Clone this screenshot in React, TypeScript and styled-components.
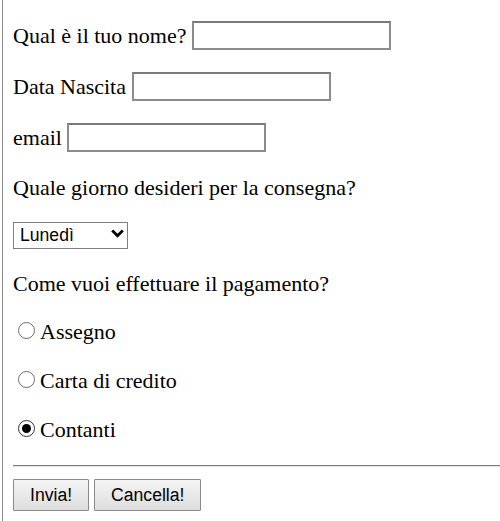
import styled, { createGlobalStyle } from 'styled-components'

// global
const GlobalStyle = createGlobalStyle`
  html, body {
    margin: 0;
    padding: 0;
    background: #fff;
    overflow: hidden;
  }
  body {
    font-family: 'Liberation Serif', 'Times New Roman', serif;
    font-size: 22px;
    color: #000;
  }
`

// styled
const Page = styled.form`
  margin-left: 2px;
  min-height: 521px;
  box-sizing: border-box;
  border-left: 1px solid #8a8a8a;
  padding: 21px 0 0 10px;
  display: flex;
  flex-direction: column;
`

const FieldRow = styled.div`
  display: flex;
  align-items: center;
  gap: 5.5px;
  height: 29px;
  margin-bottom: 22px;
  line-height: 24px;
`

const TextInput = styled.input`
  box-sizing: border-box;
  width: 199px;
  height: 29px;
  margin: 0;
  border: 2px solid #8c8c8c;
  border-top-color: #7a7a7a;
  background: #fff;
  font-family: 'Liberation Sans', Arial, sans-serif;
  font-size: 17px;
  padding: 0 4px;
  outline: none;
`

const Question = styled.p<{ $top: number }>`
  margin: ${(p) => p.$top}px 0 0;
  line-height: 24px;
  height: 24px;
`

const SelectWrap = styled.div`
  position: relative;
  width: 115px;
  height: 27px;
  margin-top: 21px;

  svg {
    position: absolute;
    right: 4px;
    top: 8px;
    pointer-events: none;
  }
`

const Select = styled.select`
  appearance: none;
  box-sizing: border-box;
  width: 100%;
  height: 100%;
  margin: 0;
  border: 1px solid #7f7f7f;
  border-radius: 0;
  background: #fff;
  padding: 0 0 0 6px;
  font-family: 'Liberation Sans', Arial, sans-serif;
  font-size: 17.6px;
  color: #000;
  outline: none;
`

const RadioList = styled.div`
  display: flex;
  flex-direction: column;
  gap: 25px;
  margin-top: 23.5px;
`

const RadioRow = styled.label`
  display: flex;
  align-items: flex-start;
  height: 24px;
  line-height: 24px;
`

const RadioDot = styled.span<{ $checked?: boolean }>`
  box-sizing: border-box;
  width: 17px;
  height: 17px;
  margin: 2.5px 5px 0 5px;
  border-radius: 50%;
  border: 1px solid ${(p) => (p.$checked ? '#333' : '#6e6e6e')};
  background: #fff;
  display: flex;
  align-items: center;
  justify-content: center;

  &::after {
    content: '';
    display: ${(p) => (p.$checked ? 'block' : 'none')};
    width: 9px;
    height: 9px;
    border-radius: 50%;
    background: #000;
  }
`

const Rule = styled.hr`
  margin: 23.5px 0 0;
  height: 0;
  border: none;
  border-top: 1px solid #7e7e7e;
  border-bottom: 1px solid #e4e4e4;
`

const ButtonBar = styled.div`
  display: flex;
  gap: 5px;
  margin-top: 12px;
`

const Button = styled.button`
  box-sizing: border-box;
  height: 32px;
  padding: 0 16px;
  margin: 0;
  border: 1px solid #8a8a8a;
  border-radius: 1px;
  background: linear-gradient(#f4f4f4, #dedede);
  font-family: 'Liberation Sans', Arial, sans-serif;
  font-size: 17.6px;
  color: #000;
  cursor: pointer;
`

// component
const App = () => {
  return (
    <>
      <GlobalStyle />
      <Page onSubmit={(e) => e.preventDefault()}>
        <FieldRow>
          <span>Qual è il tuo nome?</span>
          <TextInput type='text' />
        </FieldRow>
        <FieldRow>
          <span>Data Nascita</span>
          <TextInput type='text' />
        </FieldRow>
        <FieldRow>
          <span>email</span>
          <TextInput type='text' />
        </FieldRow>

        <Question $top={2}>Quale giorno desideri per la consegna?</Question>
        <SelectWrap>
          <Select defaultValue='lun'>
            <option value='lun'>Lunedì</option>
            <option value='mar'>Martedì</option>
            <option value='mer'>Mercoledì</option>
            <option value='gio'>Giovedì</option>
            <option value='ven'>Venerdì</option>
          </Select>
          <svg width='13' height='9' viewBox='0 0 13 9'>
            <polyline
              points='1.2,1.5 6.5,6.8 11.8,1.5'
              fill='none'
              stroke='#000'
              strokeWidth='2.8'
            />
          </svg>
        </SelectWrap>

        <Question $top={24}>Come vuoi effettuare il pagamento?</Question>
        <RadioList>
          <RadioRow>
            <RadioDot />
            Assegno
          </RadioRow>
          <RadioRow>
            <RadioDot />
            Carta di credito
          </RadioRow>
          <RadioRow>
            <RadioDot $checked />
            Contanti
          </RadioRow>
        </RadioList>

        <Rule />
        <ButtonBar>
          <Button type='submit'>Invia!</Button>
          <Button type='reset'>Cancella!</Button>
        </ButtonBar>
      </Page>
    </>
  )
}

export default App
